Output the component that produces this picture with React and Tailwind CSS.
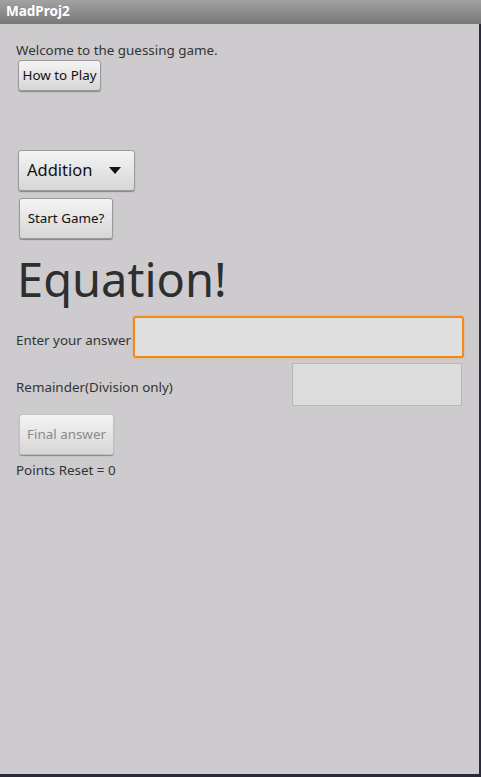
import { useState } from 'react';

function AndroidButton({ children, className = '', disabled = false }) {
  return (
    <button
      type="button"
      disabled={disabled}
      className={
        'flex items-center rounded-[3px] border border-[#9a9a9a] bg-gradient-to-b from-[#f4f4f4] to-[#d6d6d6] shadow-[0_1px_1px_rgba(0,0,0,0.35)] ' +
        (disabled ? 'text-[#8a8a8a] ' : 'text-[#111] ') +
        className
      }
    >
      {children}
    </button>
  );
}

export default function App() {
  const [answer, setAnswer] = useState('');
  const [remainder, setRemainder] = useState('');

  return (
    <div className="flex h-[777px] w-[481px] flex-col overflow-hidden bg-[#2a2a3a] font-['Noto_Sans',sans-serif]">
      {/* Title bar */}
      <div className="flex h-[24px] items-center bg-gradient-to-b from-[#a2a2a2] to-[#787878] pl-[6px]">
        <span className="text-[13.5px] font-bold leading-none text-white">MadProj2</span>
      </div>

      <div className="mr-[2px] mb-[3px] flex flex-1 flex-col bg-[#cdcbce] pl-[16px]">
        <p className="mt-[16px] text-[13.4px] leading-[20px] text-[#333]">Welcome to the guessing game.</p>

        <AndroidButton className="ml-[2px] h-[31px] w-[83px] justify-center text-[13.4px]">How to Play</AndroidButton>

        {/* Spinner */}
        <AndroidButton className="ml-[2px] mt-[59px] h-[41px] w-[117px] justify-between pl-[8px] pr-[13px] text-[16.5px]">
          <span>Addition</span>
          <svg width="12" height="7" viewBox="0 0 12 7">
            <path d="M0 0 H12 L6 7 Z" fill="#111" />
          </svg>
        </AndroidButton>

        <AndroidButton className="ml-[3px] mt-[7px] h-[41px] w-[94px] justify-center text-[13.4px]">Start Game?</AndroidButton>

        <h1 className="mt-[12px] ml-[1px] text-[47px] leading-[56px] text-[#2e2e2e]">Equation!</h1>

        <div className="mt-[9px] flex items-center">
          <span className="w-[117px] whitespace-nowrap pt-[6px] text-[13.4px] text-[#333]">Enter your answer</span>
          <input
            value={answer}
            onChange={(e) => setAnswer(e.target.value)}
            className="h-[42px] w-[331px] rounded-[3px] border-2 border-[#f28a1c] bg-[#dfdfdf] shadow-[0_0_2px_#f8a040] outline-none"
          />
        </div>

        <div className="mt-[5px] flex items-center">
          <span className="w-[276px] pt-[6px] text-[13.4px] text-[#333]">Remainder(Division only)</span>
          <input
            value={remainder}
            onChange={(e) => setRemainder(e.target.value)}
            className="h-[43px] w-[170px] border border-[#b8b8b8] bg-[#dcdcdc] outline-none"
          />
        </div>

        <AndroidButton disabled className="ml-[3px] mt-[8px] h-[41px] w-[95px] justify-center border-[#c2c2c2] from-[#d8d8d8] to-[#cdcdcd] text-[13.4px] shadow-[0_1px_1px_rgba(0,0,0,0.15)]">
          Final answer
        </AndroidButton>

        <p className="mt-[5px] text-[13.4px] leading-[20px] text-[#333]">Points Reset = 0</p>
      </div>
    </div>
  );
}
